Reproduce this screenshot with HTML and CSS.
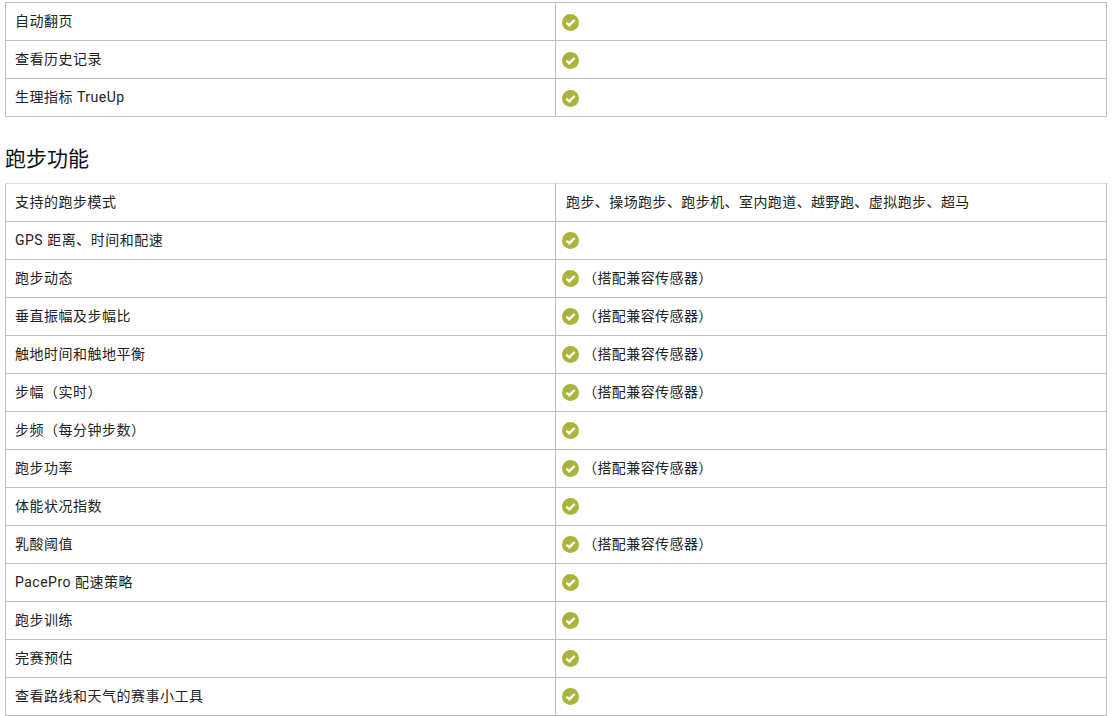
FILE: index.html
```html
<!DOCTYPE html>
<html lang="zh-CN">
<head>
<meta charset="utf-8">
<title>跑步功能</title>
<link rel="stylesheet" href="styles.css">
</head>
<body>
<svg class="defs" width="0" height="0" aria-hidden="true"><defs>
<symbol id="ok" viewBox="0 0 17 17"><circle cx="8.5" cy="8.5" r="8.5" fill="#aab43a"/><path d="M4.4 8.7 7.2 11.4 12.6 6" fill="none" stroke="#fff" stroke-width="2.4"/></symbol>
</defs></svg>
<main class="page">
<table class="specs first">
<tr><td class="name">自动翻页</td><td class="val"><div class="cell"><svg class="ok"><use href="#ok"/></svg></div></td></tr>
<tr><td class="name">查看历史记录</td><td class="val"><div class="cell"><svg class="ok"><use href="#ok"/></svg></div></td></tr>
<tr><td class="name">生理指标 TrueUp</td><td class="val"><div class="cell"><svg class="ok"><use href="#ok"/></svg></div></td></tr>
</table>
<h2 class="section">跑步功能</h2>
<table class="specs second">
<tr><td class="name">支持的跑步模式</td><td class="val modes">跑步、操场跑步、跑步机、室内跑道、越野跑、虚拟跑步、超马</td></tr>
<tr><td class="name">GPS 距离、时间和配速</td><td class="val"><div class="cell"><svg class="ok"><use href="#ok"/></svg></div></td></tr>
<tr><td class="name">跑步动态</td><td class="val"><div class="cell"><svg class="ok"><use href="#ok"/></svg><span class="note">（搭配兼容传感器）</span></div></td></tr>
<tr><td class="name">垂直振幅及步幅比</td><td class="val"><div class="cell"><svg class="ok"><use href="#ok"/></svg><span class="note">（搭配兼容传感器）</span></div></td></tr>
<tr><td class="name">触地时间和触地平衡</td><td class="val"><div class="cell"><svg class="ok"><use href="#ok"/></svg><span class="note">（搭配兼容传感器）</span></div></td></tr>
<tr><td class="name">步幅（实时）</td><td class="val"><div class="cell"><svg class="ok"><use href="#ok"/></svg><span class="note">（搭配兼容传感器）</span></div></td></tr>
<tr><td class="name">步频（每分钟步数）</td><td class="val"><div class="cell"><svg class="ok"><use href="#ok"/></svg></div></td></tr>
<tr><td class="name">跑步功率</td><td class="val"><div class="cell"><svg class="ok"><use href="#ok"/></svg><span class="note">（搭配兼容传感器）</span></div></td></tr>
<tr><td class="name">体能状况指数</td><td class="val"><div class="cell"><svg class="ok"><use href="#ok"/></svg></div></td></tr>
<tr><td class="name">乳酸阈值</td><td class="val"><div class="cell"><svg class="ok"><use href="#ok"/></svg><span class="note">（搭配兼容传感器）</span></div></td></tr>
<tr><td class="name">PacePro 配速策略</td><td class="val"><div class="cell"><svg class="ok"><use href="#ok"/></svg></div></td></tr>
<tr><td class="name">跑步训练</td><td class="val"><div class="cell"><svg class="ok"><use href="#ok"/></svg></div></td></tr>
<tr><td class="name">完赛预估</td><td class="val"><div class="cell"><svg class="ok"><use href="#ok"/></svg></div></td></tr>
<tr><td class="name">查看路线和天气的赛事小工具</td><td class="val"><div class="cell"><svg class="ok"><use href="#ok"/></svg></div></td></tr>
</table>
</main>
</body>
</html>
```
FILE: styles.css
```css
html, body {
  margin: 0;
  padding: 0;
  background: #fff;
  overflow: hidden;
}
.defs {
  display: block;
  height: 0;
}
.page {
  padding: 2px 9px 0 5px;
  font-family: Roboto, "Noto Sans CJK SC", sans-serif;
  color: #222;
}
.specs {
  width: 1102px;
  table-layout: fixed;
  border-collapse: collapse;
  font-size: 14px;
  letter-spacing: 0.42px;
}
.specs td {
  height: 38px;
  box-sizing: border-box;
  border: 1px solid #bfbfbf;
  vertical-align: middle;
}
.second tr:first-child td {
  border-top-color: #dedede;
}
.name {
  width: 529px;
  padding: 0 9px 3px;
  letter-spacing: 0.5px;
}
.val {
  width: 530px;
  padding: 0 10px 3px;
}
td.val:has(.cell) {
  padding: 0 6px;
}
.cell {
  display: flex;
  align-items: center;
  height: 37px;
}
.ok {
  flex: none;
  width: 17px;
  height: 17px;
}
.first .ok {
  margin-top: 2px;
}
.note {
  margin-left: 4px;
  padding-bottom: 4px;
}
.section {
  margin: 0;
  height: 66px;
  box-sizing: border-box;
  padding-top: 29px;
  font-size: 21px;
  line-height: 26px;
  font-weight: 400;
  color: #111;
}
```
